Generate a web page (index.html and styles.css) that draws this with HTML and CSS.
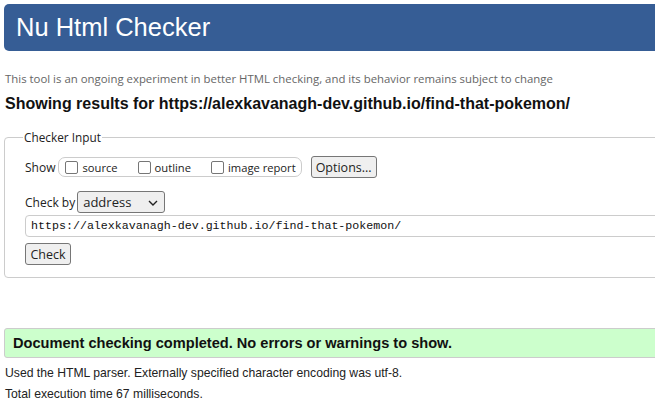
FILE: index.html
```html
<!DOCTYPE html>
<html>
<head>
<meta charset="utf-8">
<title>Nu Html Checker</title>
<link rel="stylesheet" href="styles.css">
</head>
<body>
<div class="page">
  <h1 class="masthead">Nu Html Checker</h1>
  <p class="tagline">This tool is an ongoing experiment in better HTML checking, and its behavior remains subject to change</p>
  <h2 class="results-title">Showing results for https://alexkavanagh-dev.github.io/find-that-pokemon/</h2>
  <fieldset class="checker">
    <legend class="legend">Checker Input</legend>
    <div class="row show-row">
      <span class="label">Show</span>
      <span class="pill">
        <label class="opt"><span class="box"></span>source</label>
        <label class="opt"><span class="box"></span>outline</label>
        <label class="opt"><span class="box"></span>image report</label>
      </span>
      <span class="btn options">Options...</span>
    </div>
    <div class="row by-row">
      <span class="label">Check by</span>
      <span class="select">address
        <svg class="chev" width="10" height="6" viewBox="0 0 10 6"><path d="M1 1 L5 5 L9 1" fill="none" stroke="#222" stroke-width="1.4"/></svg>
      </span>
    </div>
    <div class="url">https://alexkavanagh-dev.github.io/find-that-pokemon/</div>
    <div class="row"><span class="btn check">Check</span></div>
  </fieldset>
  <p class="success">Document checking completed. No errors or warnings to show.</p>
  <p class="stats">Used the HTML parser. Externally specified character encoding was utf-8.</p>
  <p class="stats">Total execution time 67 milliseconds.</p>
</div>
</body>
</html>
```
FILE: styles.css
```css
html, body { margin: 0; padding: 0; overflow: hidden; background: #fff; }
body { width: 655px; height: 407px; }
.page {
  width: 720px;
  padding: 4px 0 0 4px;
  font-family: "Liberation Sans", Arial, sans-serif;
  color: #222;
}
.masthead {
  margin: 0;
  height: 47px;
  box-sizing: border-box;
  background: #365d95;
  color: #fff;
  border-radius: 5px 0 0 5px;
  font-weight: normal;
  font-size: 25.5px;
  line-height: 47px;
  padding-left: 12px;
}
.tagline {
  margin: 21px 0 0 1px;
  font-family: "Open Sans", "Noto Sans", sans-serif;
  font-size: 11.4px;
  line-height: 14px;
  color: #666;
}
.results-title {
  margin: 9px 0 0 1px;
  font-size: 16px;
  line-height: 18px;
  font-weight: bold;
  color: #111;
}
.checker {
  margin: 16px 0 0 0;
  border: 1px solid #ccc;
  border-radius: 4px;
  padding: 4px 0 12px 20px;
  font-family: "Open Sans", "Noto Sans", sans-serif;
  font-size: 12px;
  color: #222;
}
.legend { padding: 0 1px; margin-left: -2px; font-size: 11.8px; line-height: 16px; color: #222; }
.row { display: flex; align-items: center; }
.show-row { height: 24px; margin-top: 6px; }
.label { margin-right: 3px; }
.pill {
  display: flex;
  align-items: center;
  height: 20px;
  box-sizing: border-box;
  border: 1px solid #ccc;
  border-radius: 7px;
  padding: 0 5px 0 6px;
  gap: 20px;
}
.opt { display: flex; align-items: center; font-size: 11.2px; }
.box {
  width: 11px; height: 11px;
  border: 1px solid #767676;
  border-radius: 2px;
  margin-right: 4px;
  background: #fff;
}
.btn {
  display: inline-flex; align-items: center;
  border: 1px solid #767676;
  border-radius: 3px;
  background: #efefef;
  padding: 0 5px;
  height: 20px;
  box-sizing: border-box;
  font-size: 12.5px;
}
.options { margin-left: 9px; height: 22px; width: 66px; justify-content: center; padding: 0; }
.by-row { margin-top: 12px; height: 22px; }
.select {
  display: inline-flex; align-items: center; justify-content: space-between;
  width: 88px; height: 22px; box-sizing: border-box;
  border: 1px solid #767676; border-radius: 3px;
  background: #efefef;
  padding: 0 6px 0 5px;
  font-size: 13px;
  margin-left: -1px;
}
.chev { margin-top: 1px; }
.url {
  margin-top: 2px;
  height: 22px;
  box-sizing: border-box;
  border: 1px solid #ccc;
  border-radius: 4px;
  padding-left: 5px;
  font-family: "Liberation Mono", monospace;
  font-size: 11.65px;
  line-height: 20px;
  color: #111;
}
.check { margin-top: 6px; height: 22px; width: 46px; justify-content: center; padding: 0; }
.success {
  margin: 50px 0 0 0;
  background: #ccffcc;
  border: 1px solid #ccc;
  border-radius: 3px 0 0 3px;
  height: 30px;
  box-sizing: border-box;
  padding-left: 8px;
  font-weight: bold;
  font-size: 14.6px;
  line-height: 28px;
  color: #111;
}
.stats { margin: 8px 0 0 1px; font-size: 12.2px; line-height: 14px; color: #222; }
.stats + .stats { margin-top: 7px; }
```
